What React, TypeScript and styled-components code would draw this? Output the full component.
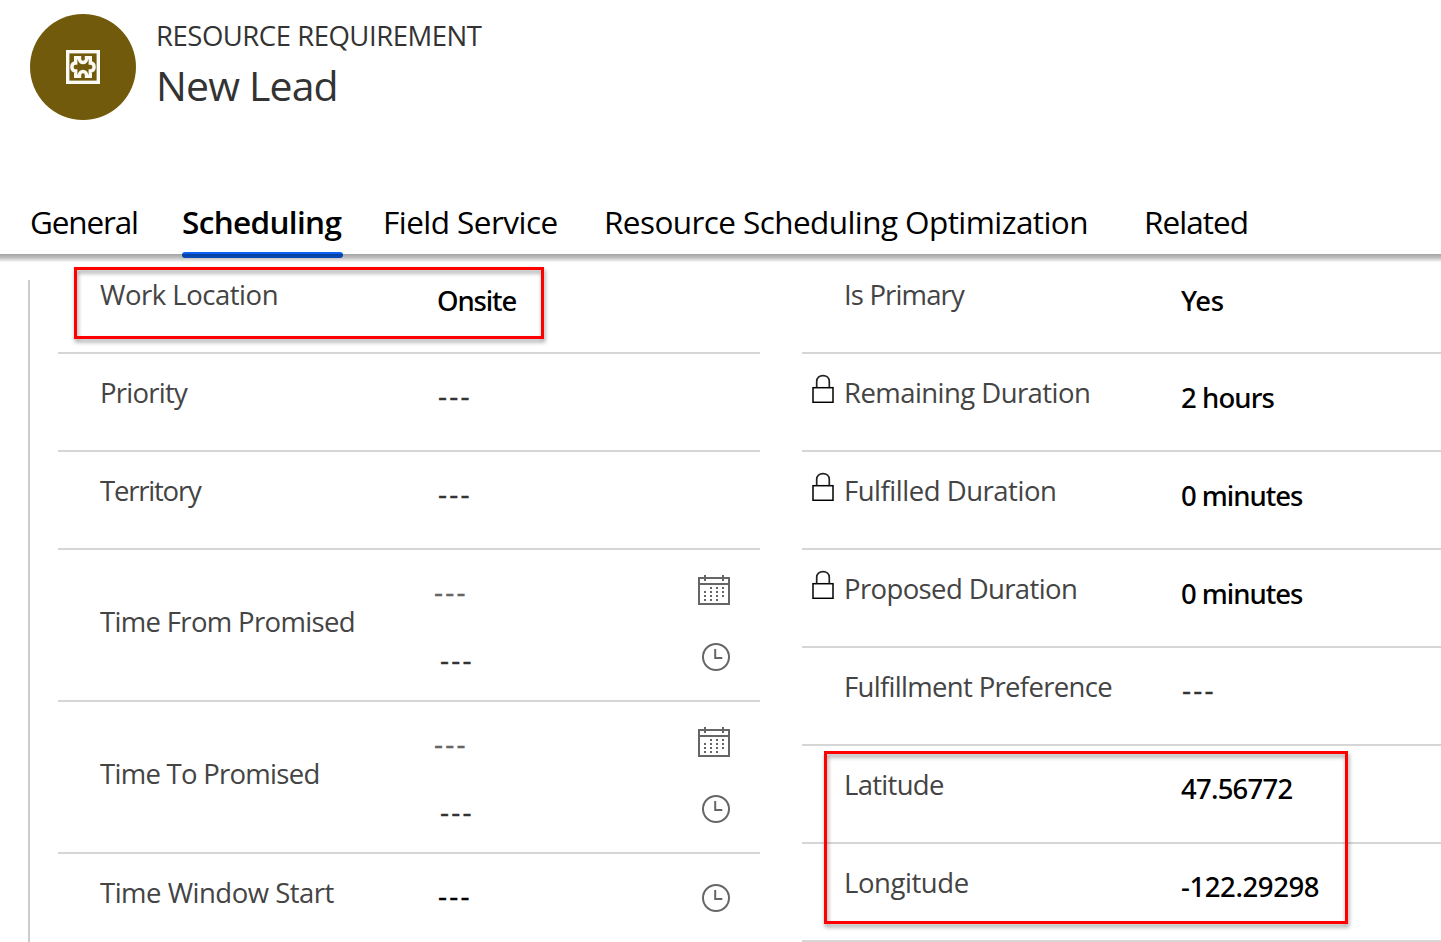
import React from 'react';
import styled, { createGlobalStyle, css } from 'styled-components';

const GlobalStyle = createGlobalStyle`
  * { box-sizing: border-box; }
  body {
    margin: 0;
    background: #fff;
    font-family: "Open Sans", "Noto Sans", sans-serif;
    font-size: 27.5px;
    line-height: 38px;
    overflow: hidden;
  }
`;

const Page = styled.div`
  width: 1441px;
  height: 942px;
  overflow: hidden;
  background: #fff;
`;

const Header = styled.header`
  position: relative;
  z-index: 1;
  height: 254px;
  display: flex;
  flex-direction: column;
  justify-content: space-between;

  &::after {
    content: "";
    position: absolute;
    top: 254px;
    left: 0;
    right: 0;
    height: 8px;
    background: linear-gradient(rgba(0, 0, 0, 0.36), rgba(0, 0, 0, 0.25) 45%, rgba(0, 0, 0, 0.02));
  }
`;

const Identity = styled.div`
  display: flex;
  gap: 20px;
  padding: 14px 0 0 30px;
`;

const Avatar = styled.div`
  display: flex;
  align-items: center;
  justify-content: center;
  width: 106px;
  height: 106px;
  border-radius: 50%;
  background: #725a0c;
`;

const Titles = styled.div`
  display: flex;
  flex-direction: column;
  padding-top: 3px;
  color: #333;
  white-space: nowrap;
`;

const EntityName = styled.span`
  letter-spacing: -0.48px;
`;

const RecordName = styled.h1`
  margin: 2px 0 0;
  font-size: 41px;
  font-weight: 400;
  line-height: 56px;
  letter-spacing: -0.85px;
`;

const Tabs = styled.nav`
  display: grid;
  grid-template-columns: 152px 201px 221px 540px auto;
  height: 54px;
  padding-left: 30px;
  font-size: 31.5px;
  line-height: 44px;
  color: #000;
`;

const Tab = styled.a<{ $tracking: number; $active?: boolean }>`
  position: relative;
  white-space: nowrap;
  letter-spacing: ${(p) => p.$tracking}px;
  ${(p) =>
    p.$active &&
    css`
      font-weight: 600;
      &::after {
        content: "";
        position: absolute;
        left: 0;
        top: 52px;
        width: 161px;
        height: 6px;
        border-radius: 3px;
        background: #0b63f3;
      }
    `}
`;

const Form = styled.main`
  display: grid;
  grid-template-columns: 2px 702px 639px;
  padding: 2px 0 0 28px;
`;

const Rail = styled.div`
  margin-top: 24px;
  background: #ccc;
`;

const Column = styled.section<{ $offset: number }>`
  display: flex;
  flex-direction: column;
  width: ${(p) => (p.$offset === 28 ? 702 : 639)}px;
  margin-left: ${(p) => p.$offset}px;
`;

const Row = styled.div<{ $tall?: boolean }>`
  position: relative;
  display: grid;
  grid-template-columns: 42px 336px 1fr;
  height: ${(p) => (p.$tall ? 152 : 98)}px;
  border-bottom: 2px solid #d6d6d6;
`;

const LockSlot = styled.div`
  display: flex;
  padding: 20px 0 0 10px;
`;

const Label = styled.div<{ $tracking: number; $tall?: boolean }>`
  padding-top: ${(p) => (p.$tall ? 53 : 20)}px;
  color: #444;
  white-space: nowrap;
  letter-spacing: ${(p) => p.$tracking}px;
`;

const Value = styled.div<{ $tracking: number; $top?: number }>`
  padding: ${(p) => p.$top ?? 25}px 0 0 1px;
  font-family: "Noto Sans", sans-serif;
  font-weight: 500;
  color: #000;
  white-space: nowrap;
  letter-spacing: ${(p) => p.$tracking}px;
`;

const Empty = styled.div<{ $tone?: string; $shift?: number }>`
  padding-top: 22px;
  margin-left: ${(p) => p.$shift ?? 2}px;
  color: ${(p) => p.$tone ?? '#333'};
  font-size: 28px;
  letter-spacing: 2.2px;
  -webkit-text-stroke: 0.3px currentColor;
`;

const Pickers = styled.div`
  display: flex;
  flex-direction: column;
`;

const Picker = styled.div`
  display: flex;
  justify-content: space-between;
  align-items: flex-start;
  height: 68px;
  padding-right: 30px;
`;

const IconSlot = styled.div<{ $top?: number }>`
  display: flex;
  padding-top: ${(p) => p.$top ?? 25}px;
`;

const Highlight = styled.div<{ $wide?: boolean }>`
  position: absolute;
  z-index: 2;
  border: 3px solid #fe0000;
  filter: drop-shadow(1px 3px 2px rgba(0, 0, 0, 0.4));
  ${(p) =>
    p.$wide
      ? css`
          left: 22px;
          top: 5px;
          width: 524px;
          height: 173px;
        `
      : css`
          left: 16px;
          top: 11px;
          width: 470px;
          height: 72px;
        `}
`;

const PuzzleIcon = () => (
  <svg width="34" height="34" viewBox="0 0 34 34" fill="none" stroke="#fbf9f3">
    <rect x="1.7" y="1.7" width="30.6" height="30.6" strokeWidth="3.4" />
    <path
      strokeWidth="3.4"
      d="M9.7 7.7H13.5V9A3.5 3.5 0 0 0 20.5 9V7.7H24.3V13C27 13 28.1 14.8 28.1 17S27 21 24.3 21V26.3H20.5V25A3.5 3.5 0 0 0 13.5 25V26.3H9.7V21C7 21 5.9 19.2 5.9 17S7 13 9.7 13Z"
    />
  </svg>
);

const LockIcon = () => (
  <svg width="22" height="29" viewBox="0 0 22 29" fill="none" stroke="#000">
    <rect x="1" y="13.7" width="20" height="14.6" strokeWidth="1.5" />
    <path d="M4.7 13.5V7.5C4.7 3.8 7.4 1.7 11 1.7S17.3 3.8 17.3 7.5V13.5" stroke="#222" strokeWidth="1.7" />
  </svg>
);

const dots: [number, number][] = [
  [12, 12], [18, 12], [24, 12],
  [6, 16], [12, 16], [18, 16], [24, 16],
  [6, 20], [12, 20], [18, 20], [24, 20],
  [6, 24], [12, 24], [18, 24],
];

const CalendarIcon = () => (
  <svg width="32" height="30" viewBox="0 0 32 30" fill="none" stroke="#666" strokeWidth="2">
    <path d="M1 3H31V29H1ZM1 9H31M7 0V6M25 0V6" />
    {dots.map(([x, y]) => (
      <rect key={`${x}-${y}`} x={x} y={y} width="2" height="2" fill="#666" stroke="none" />
    ))}
  </svg>
);

const ClockIcon = () => (
  <svg width="28" height="28" viewBox="0 0 28 28" fill="none" stroke="#666" strokeWidth="2">
    <circle cx="14" cy="14" r="13" />
    <path d="M13.2 6V15H20.3" />
  </svg>
);

const PromisedPickers = () => (
  <Pickers>
    <Picker>
      <Empty $tone="#666" $shift={-2}>---</Empty>
      <IconSlot>
        <CalendarIcon />
      </IconSlot>
    </Picker>
    <Picker>
      <Empty $shift={4}>---</Empty>
      <IconSlot>
        <ClockIcon />
      </IconSlot>
    </Picker>
  </Pickers>
);

export default function App() {
  return (
    <Page>
      <GlobalStyle />
      <Header>
        <Identity>
          <Avatar>
            <PuzzleIcon />
          </Avatar>
          <Titles>
            <EntityName>RESOURCE REQUIREMENT</EntityName>
            <RecordName>New Lead</RecordName>
          </Titles>
        </Identity>
        <Tabs>
          <Tab $tracking={-1.15}>General</Tab>
          <Tab $tracking={-0.65} $active>Scheduling</Tab>
          <Tab $tracking={-0.54}>Field Service</Tab>
          <Tab $tracking={-0.58}>Resource Scheduling Optimization</Tab>
          <Tab $tracking={-0.95}>Related</Tab>
        </Tabs>
      </Header>
      <Form>
        <Rail />
        <Column $offset={28}>
          <Row>
            <LockSlot />
            <Label $tracking={-0.48}>Work Location</Label>
            <Value $tracking={-1.12} $top={26}>Onsite</Value>
            <Highlight />
          </Row>
          <Row>
            <LockSlot />
            <Label $tracking={-0.75}>Priority</Label>
            <Empty>---</Empty>
          </Row>
          <Row>
            <LockSlot />
            <Label $tracking={-1.2}>Territory</Label>
            <Empty>---</Empty>
          </Row>
          <Row $tall>
            <LockSlot />
            <Label $tall $tracking={-0.66}>Time From Promised</Label>
            <PromisedPickers />
          </Row>
          <Row $tall>
            <LockSlot />
            <Label $tall $tracking={-0.72}>Time To Promised</Label>
            <PromisedPickers />
          </Row>
          <Row>
            <LockSlot />
            <Label $tracking={-0.5}>Time Window Start</Label>
            <Picker>
              <Empty $tone="#000">---</Empty>
              <IconSlot $top={30}>
                <ClockIcon />
              </IconSlot>
            </Picker>
          </Row>
        </Column>
        <Column $offset={70}>
          <Row>
            <LockSlot />
            <Label $tracking={-0.85}>Is Primary</Label>
            <Value $tracking={-0.4} $top={26}>Yes</Value>
          </Row>
          <Row>
            <LockSlot><LockIcon /></LockSlot>
            <Label $tracking={-0.56}>Remaining Duration</Label>
            <Value $tracking={-0.9}>2 hours</Value>
          </Row>
          <Row>
            <LockSlot><LockIcon /></LockSlot>
            <Label $tracking={-0.48}>Fulfilled Duration</Label>
            <Value $tracking={-1.03}>0 minutes</Value>
          </Row>
          <Row>
            <LockSlot><LockIcon /></LockSlot>
            <Label $tracking={-0.62}>Proposed Duration</Label>
            <Value $tracking={-1.03}>0 minutes</Value>
          </Row>
          <Row>
            <LockSlot />
            <Label $tracking={-0.68}>Fulfillment Preference</Label>
            <Empty>---</Empty>
          </Row>
          <Row>
            <LockSlot />
            <Label $tracking={-0.7}>Latitude</Label>
            <Value $tracking={-0.77} $top={24}>47.56772</Value>
            <Highlight $wide />
          </Row>
          <Row>
            <LockSlot />
            <Label $tracking={-0.43}>Longitude</Label>
            <Value $tracking={-0.4} $top={24}>-122.29298</Value>
          </Row>
        </Column>
      </Form>
    </Page>
  );
}
